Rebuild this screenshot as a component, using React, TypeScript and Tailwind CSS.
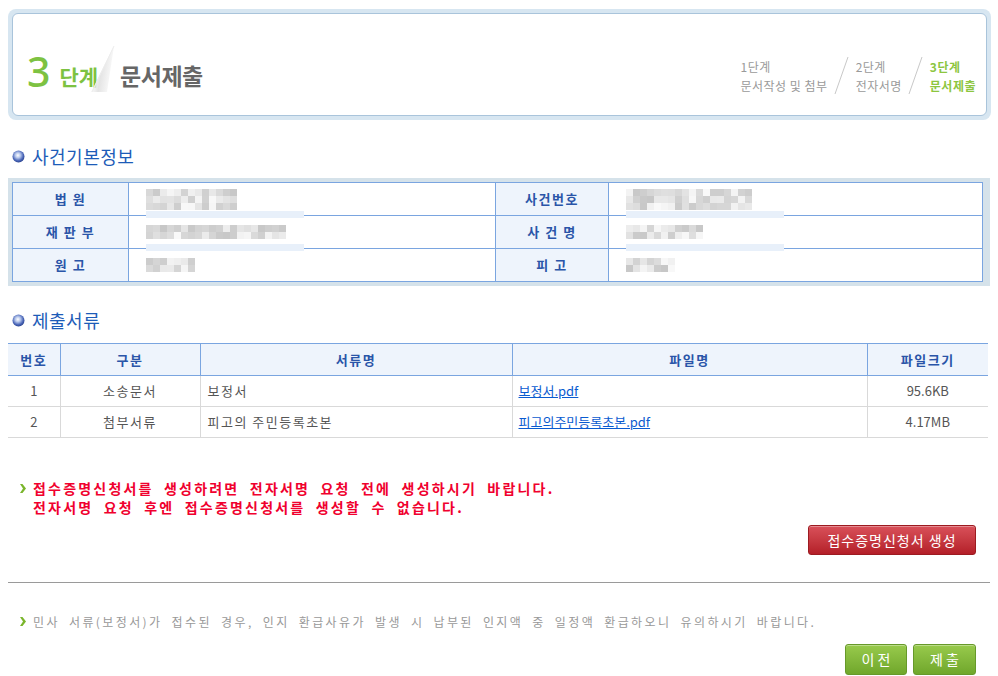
import React from 'react'

const KR = "font-['Noto_Sans_CJK_KR',sans-serif]"

// pseudo-random grays for the blurred (mosaic) personal info
function Mosaic({ cols, rows, seed }: { cols: number; rows: number; seed: number }) {
  let s = seed
  const next = () => {
    s = (s * 9301 + 49297) % 233280
    return s / 233280
  }
  const cells: number[] = []
  for (let i = 0; i < cols * rows; i++) cells.push(Math.round(250 - next() * 52))
  return (
    <div className="grid" style={{ gridTemplateColumns: `repeat(${cols}, 7px)` }}>
      {cells.map((g, i) => (
        <div key={i} className="h-[7px] w-[7px]" style={{ backgroundColor: `rgb(${g},${g},${g})` }} />
      ))}
    </div>
  )
}

function CircleBullet() {
  return (
    <svg width="13" height="13" viewBox="0 0 13 13" className="shrink-0">
      <defs>
        <radialGradient id="cb" cx="45%" cy="40%" r="60%">
          <stop offset="0%" stopColor="#ffffff" />
          <stop offset="35%" stopColor="#b8c8ec" />
          <stop offset="75%" stopColor="#4a66b8" />
          <stop offset="100%" stopColor="#2c4590" />
        </radialGradient>
      </defs>
      <circle cx="6.5" cy="6.5" r="6" fill="url(#cb)" />
    </svg>
  )
}

function Arrow() {
  return (
    <svg width="6" height="9" viewBox="0 0 6 9" className="shrink-0">
      <polygon points="0,0 2.5,0 6,4.5 2.5,9 0,9 3,4.5" fill="#7ab52c" />
    </svg>
  )
}

function StepSlash() {
  return (
    <svg width="16" height="40" viewBox="0 0 16 40" className="mx-[6px] shrink-0">
      <line x1="14" y1="1" x2="1" y2="38" stroke="#c8c8c8" strokeWidth="1" />
    </svg>
  )
}

function SectionTitle({ children }: { children: React.ReactNode }) {
  return (
    <div className="flex h-[20px] items-center gap-[7px] pl-[4px]">
      <CircleBullet />
      <span className="text-[18px] leading-none tracking-[0.5px] text-[#1d5cb8]">{children}</span>
    </div>
  )
}

const label = 'border border-[#7aa5e0] bg-[#eef4fc] text-center text-[13px] font-bold tracking-[1.5px] text-[#2a55a8]'
const value = 'relative border border-[#7aa5e0] bg-white pl-[17px] align-middle'

function Bar() {
  return <div className="absolute bottom-[-3px] left-[17px] z-10 h-[7px] w-[158px] bg-[#e8f0fa]" />
}

export default function App() {
  const files = [
    { no: '1', kind: '소송문서', name: '보정서', file: '보정서.pdf', size: '95.6KB' },
    { no: '2', kind: '첨부서류', name: '피고의 주민등록초본', file: '피고의주민등록초본.pdf', size: '4.17MB' },
  ]

  return (
    <div className={`${KR} min-h-[676px] w-[998px] bg-white px-[8px] pt-[9px]`}>
      {/* Step header */}
      <div className="h-[111px] w-[983px] rounded-[8px] bg-[#d7e6f1] p-[4px]">
        <div className="flex h-full items-end justify-between rounded-[6px] border border-[#a9c4db] bg-white pb-[23px] pl-[14px] pr-[10px]">
          <div className="mb-[6px] flex items-end">
            <span className="font-['Noto_Sans',sans-serif] text-[41px] font-medium leading-[30px] text-[#7dc242]">3</span>
            <span className="mb-[-1px] ml-[9px] text-[21px] font-bold leading-none text-[#7dc242]">단계</span>
            <svg width="30" height="48" viewBox="0 0 30 48" className="-ml-[9px] mb-[-8px] shrink-0">
              <defs>
                <linearGradient id="sl" x1="0" y1="0" x2="1" y2="0.3">
                  <stop offset="0%" stopColor="#ffffff" stopOpacity="0" />
                  <stop offset="55%" stopColor="#e4e4e4" />
                  <stop offset="100%" stopColor="#fafafa" />
                </linearGradient>
              </defs>
              <polygon points="25,0 2,46 18,46" fill="url(#sl)" />
              <line x1="25" y1="0" x2="3" y2="46" stroke="#ececec" strokeWidth="1" />
            </svg>
            <span className="mb-[-1px] ml-[1px] text-[23px] font-bold leading-none tracking-[-0.5px] text-[#666666]">문서제출</span>
          </div>
          <div className="mb-[-4px] flex items-center text-[12px] leading-[19px] tracking-[0.5px]">
            <div className="text-[#9a9a9a]">
              <div>1단계</div>
              <div>문서작성 및 첨부</div>
            </div>
            <StepSlash />
            <div className="text-[#9a9a9a]">
              <div>2단계</div>
              <div>전자서명</div>
            </div>
            <StepSlash />
            <div className="font-bold text-[#8dc63f]">
              <div>3단계</div>
              <div>문서제출</div>
            </div>
          </div>
        </div>
      </div>

      {/* 사건기본정보 */}
      <div className="mt-[26px]">
        <SectionTitle>사건기본정보</SectionTitle>
      </div>
      <div className="mt-[12px] w-[982px] bg-[#d5e2ea] pb-[4px] pl-[4px] pr-[8px] pt-[4px]">
        <table className="w-[970px] table-fixed border-collapse">
          <colgroup>
            <col className="w-[116px]" />
            <col className="w-[367px]" />
            <col className="w-[113px]" />
            <col className="w-[374px]" />
          </colgroup>
          <tbody>
            <tr className="h-[33px]">
              <td className={label}>법 원</td>
              <td className={value}>
                <Mosaic cols={13} rows={3} seed={11} />
                <Bar />
              </td>
              <td className={label}>사건번호</td>
              <td className={value}>
                <Mosaic cols={18} rows={3} seed={23} />
                <Bar />
              </td>
            </tr>
            <tr className="h-[33px]">
              <td className={label}>재 판 부</td>
              <td className={value}>
                <Mosaic cols={20} rows={2} seed={37} />
                <Bar />
              </td>
              <td className={label}>사 건 명</td>
              <td className={value}>
                <Mosaic cols={11} rows={2} seed={51} />
                <Bar />
              </td>
            </tr>
            <tr className="h-[33px]">
              <td className={label}>원 고</td>
              <td className={value}>
                <Mosaic cols={7} rows={2} seed={67} />
              </td>
              <td className={label}>피 고</td>
              <td className={value}>
                <Mosaic cols={7} rows={2} seed={79} />
              </td>
            </tr>
          </tbody>
        </table>
      </div>

      {/* 제출서류 */}
      <div className="mt-[24px]">
        <SectionTitle>제출서류</SectionTitle>
      </div>
      <table className="mt-[13px] w-[980px] table-fixed border-collapse text-[13px]">
        <colgroup>
          <col className="w-[52px]" />
          <col className="w-[140px]" />
          <col className="w-[312px]" />
          <col className="w-[355px]" />
          <col className="w-[121px]" />
        </colgroup>
        <thead>
          <tr className="h-[32px] border-y border-[#7aa5e0] bg-[#eef4fc] font-bold tracking-[1.5px] text-[#2a55a8]">
            <th className="font-bold">번호</th>
            <th className="border-l border-[#7aa5e0] font-bold">구분</th>
            <th className="border-l border-[#7aa5e0] font-bold">서류명</th>
            <th className="border-l border-[#7aa5e0] font-bold">파일명</th>
            <th className="border-l border-[#7aa5e0] font-bold">파일크기</th>
          </tr>
        </thead>
        <tbody className="text-[#555555]">
          {files.map((f) => (
            <tr key={f.no} className="h-[31px] border-b border-[#d9d9d9]">
              <td className="text-center">{f.no}</td>
              <td className="border-l border-[#d9d9d9] text-center tracking-[1.5px]">{f.kind}</td>
              <td className="border-l border-[#d9d9d9] pl-[7px] tracking-[1.5px]">{f.name}</td>
              <td className="border-l border-[#d9d9d9] pl-[6px]">
                <a href="#" className="text-[#0a5bd0] underline">{f.file}</a>
              </td>
              <td className="border-l border-[#d9d9d9] text-center">{f.size}</td>
            </tr>
          ))}
        </tbody>
      </table>

      {/* notice */}
      <div className="mt-[41px] flex gap-[7px] pl-[12px]">
        <div className="pt-[5px]">
          <Arrow />
        </div>
        <p className="text-[14px] font-bold leading-[19px] tracking-[2.2px] text-[#f0002e] [word-spacing:5px]">
          접수증명신청서를 생성하려면 전자서명 요청 전에 생성하시기 바랍니다.
          <br />
          전자서명 요청 후엔 접수증명신청서를 생성할 수 없습니다.
        </p>
      </div>

      <div className="mt-[8px] flex w-[968px] justify-end">
        <button className="h-[30px] w-[168px] rounded-[3px] border border-[#9c1b21] bg-gradient-to-b from-[#d9505a] to-[#b41e28] text-[14px] tracking-[1px] text-white shadow-[inset_0_1px_0_rgba(255,255,255,0.35)]">
          접수증명신청서 생성
        </button>
      </div>

      <div className="mt-[27px] h-px w-[982px] bg-[#9a9a9a]" />

      <div className="mt-[29px] flex items-center gap-[7px] pl-[12px]">
        <Arrow />
        <p className="text-[12px] leading-[19px] tracking-[2.4px] text-[#999999] [word-spacing:4px]">
          민사 서류(보정서)가 접수된 경우, 인지 환급사유가 발생 시 납부된 인지액 중 일정액 환급하오니 유의하시기 바랍니다.
        </p>
      </div>

      <div className="mt-[13px] flex w-[968px] justify-end gap-[6px]">
        <button className="h-[31px] w-[62px] rounded-[3px] border border-[#67992a] bg-gradient-to-b from-[#98ca4c] to-[#70a72b] text-[14px] text-white shadow-[inset_0_1px_0_rgba(255,255,255,0.35)]">
          이 전
        </button>
        <button className="h-[31px] w-[63px] rounded-[3px] border border-[#67992a] bg-gradient-to-b from-[#98ca4c] to-[#70a72b] text-[14px] text-white shadow-[inset_0_1px_0_rgba(255,255,255,0.35)]">
          제 출
        </button>
      </div>
    </div>
  )
}
